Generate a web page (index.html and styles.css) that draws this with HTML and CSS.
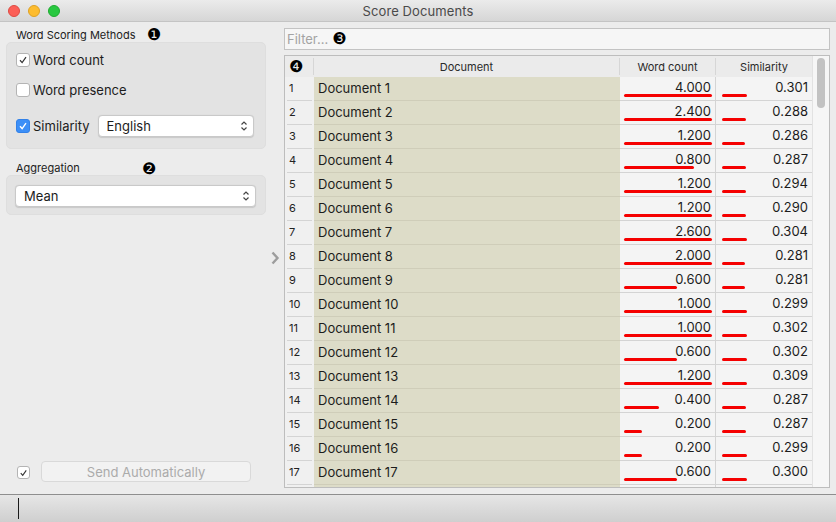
FILE: index.html
```html
<!DOCTYPE html>
<html>
<head>
<meta charset="utf-8">
<link rel="stylesheet" href="styles.css">
</head>
<body>
<div class="window">
  <div class="titlebar">
    <div class="lights">
      <span class="light red"></span><span class="light yellow"></span><span class="light green"></span>
    </div>
    <div class="title">Score Documents</div>
  </div>
  <div class="main">
    <div class="left">
      <div class="glabel">Word Scoring Methods <span class="num num1">❶</span></div>
      <div class="gbox box1">
        <div class="crow r1"><span class="cb checked"><svg viewBox="0 0 14 14"><path d="M3.5 7.3 L6 10 L10.5 3.6" fill="none" stroke="#333" stroke-width="1.4"/></svg></span><span>Word count</span></div>
        <div class="crow r2"><span class="cb"></span><span>Word presence</span></div>
        <div class="crow r3"><span class="cb blue"><svg viewBox="0 0 14 14"><path d="M3.5 7.3 L6 10 L10.5 3.6" fill="none" stroke="#fff" stroke-width="1.6"/></svg></span><span class="simlabel">Similarity</span>
          <div class="combo lang"><span>English</span><svg class="chev" viewBox="0 0 8 12"><path d="M1.5 4.5 L4 2 L6.5 4.5 M1.5 7.5 L4 10 L6.5 7.5" fill="none" stroke="#444" stroke-width="1.2"/></svg></div>
        </div>
      </div>
      <div class="glabel agg">Aggregation <span class="num num2">❷</span></div>
      <div class="gbox box2">
        <div class="combo mean"><span>Mean</span><svg class="chev" viewBox="0 0 8 12"><path d="M1.5 4.5 L4 2 L6.5 4.5 M1.5 7.5 L4 10 L6.5 7.5" fill="none" stroke="#444" stroke-width="1.2"/></svg></div>
      </div>
      <div class="spacer"></div>
      <div class="bottomrow">
        <span class="cb checked small"><svg viewBox="0 0 14 14"><path d="M3.5 7.3 L6 10 L10.5 3.6" fill="none" stroke="#333" stroke-width="1.4"/></svg></span>
        <div class="sendbtn">Send Automatically</div>
      </div>
    </div>
    <div class="splitter">
      <svg viewBox="0 0 10 14" class="arrow"><path d="M2.5 1.5 L7.5 7 L2.5 12.5" fill="none" stroke="#9d9d9d" stroke-width="2.4"/></svg>
    </div>
    <div class="right">
      <div class="filter"><span class="ph">Filter...</span> <span class="num num3">❸</span></div>
      <div class="tableframe">
        <div class="rows" id="rows">
          <div class="hrow">
            <div class="hc hidx"><span class="num num4">❹</span></div>
            <div class="hc">Document</div>
            <div class="hc">Word count</div>
            <div class="hc last">Similarity</div>
          </div>
        </div>
        <div class="scroll"><div class="thumb"></div></div>
      </div>
    </div>
  </div>
  <div class="status"><span class="cursor"></span></div>
</div>
<script>
var data = [
 [4.000,0.301],[2.400,0.288],[1.200,0.286],[0.800,0.287],[1.200,0.294],[1.200,0.290],
 [2.600,0.304],[2.000,0.281],[0.600,0.281],[1.000,0.299],[1.000,0.302],[0.600,0.302],
 [1.200,0.309],[0.400,0.287],[0.200,0.287],[0.200,0.299],[0.600,0.300]
];
var rows = document.getElementById('rows');
data.forEach(function(d, i){
  var r = document.createElement('div');
  r.className = 'row';
  var wcw = Math.min(d[0]*88, 88);
  var sw = d[1]*82;
  r.innerHTML =
    '<div class="c idx"><span>' + (i+1) + '</span></div>' +
    '<div class="c doc">Document ' + (i+1) + '</div>' +
    '<div class="c val"><span class="v">' + d[0].toFixed(3) + '</span><span class="bar" style="width:' + wcw + 'px"></span></div>' +
    '<div class="c val sim"><span class="v">' + d[1].toFixed(3) + '</span><span class="bar" style="width:' + sw + 'px"></span></div>';
  rows.appendChild(r);
});
var tail = document.createElement('div');
tail.className = 'row tail';
tail.innerHTML = '<div class="c idx"><span></span></div><div class="c doc"></div><div class="c val"></div><div class="c val sim"></div>';
rows.appendChild(tail);
</script>
</body>
</html>
```

FILE: styles.css
```css
html, body {
  margin: 0;
  padding: 0;
  width: 836px;
  height: 522px;
  overflow: hidden;
  background: #ececec;
  font-family: "Inter", "Liberation Sans", sans-serif;
  color: #1c1c1c;
}
.window {
  width: 836px;
  height: 522px;
  display: flex;
  flex-direction: column;
  background: #ececec;
}
.titlebar {
  height: 21px;
  flex: none;
  position: relative;
  background: linear-gradient(#ebebeb, #d6d6d6);
  border-bottom: 1px solid #c4c4c4;
  display: flex;
  align-items: center;
  justify-content: center;
}
.lights {
  position: absolute;
  left: 8px;
  top: 5px;
  display: flex;
  gap: 8px;
}
.light {
  width: 12px;
  height: 12px;
  border-radius: 50%;
  box-sizing: border-box;
}
.red { background: #fc5f57; border: 0.5px solid #de4a42; }
.yellow { background: #fdbc2e; border: 0.5px solid #dea123; }
.green { background: #28c840; border: 0.5px solid #1eab2f; }
.title {
  font-size: 13px;
  color: #4a4a4a;
  letter-spacing: 0.1px;
}
.main {
  flex: 1;
  display: flex;
  min-height: 0;
}
.left {
  width: 260px;
  padding: 6px 0 12px 6px;
  display: flex;
  flex-direction: column;
}
.glabel {
  height: 14px;
  font-size: 11px;
  line-height: 14px;
  padding-left: 10px;
  color: #222;
  position: relative;
}
.num {
  font-family: "DejaVu Sans", sans-serif;
  font-size: 16px;
  color: #000;
  line-height: 14px;
}
.num1 { position: absolute; left: 141px; top: 0; }
.num2 { position: absolute; left: 136px; top: 1px; }
.glabel.agg { margin-top: 12px; }
.gbox {
  background: #e3e3e3;
  border: 1px solid #dedede;
  border-radius: 5px;
  box-sizing: border-box;
}
.box1 {
  height: 107px;
  padding: 7px 0 0 9px;
}
.crow {
  display: flex;
  align-items: center;
  height: 20px;
  font-size: 13px;
  gap: 3px;
}
.crow.r2 { margin-top: 10px; }
.crow.r3 { margin-top: 15px; height: 22px; }
.cb {
  width: 14px;
  height: 14px;
  box-sizing: border-box;
  border: 1px solid #b4b4b4;
  border-radius: 3px;
  background: #fff;
  display: inline-flex;
  flex: none;
}
.cb svg { width: 12px; height: 12px; }
.cb.blue {
  background: #3c8ff7;
  border-color: #3281e8;
}
.simlabel { margin-right: 5px; }
.combo {
  height: 22px;
  box-sizing: border-box;
  background: #fff;
  border: 1px solid #c9c9c9;
  border-radius: 4px;
  box-shadow: 0 0.5px 1px rgba(0,0,0,0.12);
  display: flex;
  align-items: center;
  justify-content: space-between;
  padding: 0 5px 0 8px;
  font-size: 13px;
}
.combo .chev { width: 8px; height: 12px; }
.lang { width: 156px; margin-top: -1px; }
.box2 {
  height: 40px;
  padding: 9px 9px 0 8px;
}
.mean { width: 241px; }
.spacer { flex: 1; }
.bottomrow {
  display: flex;
  align-items: center;
  height: 21px;
  padding-left: 11px;
}
.cb.small { width: 13px; height: 13px; margin-top: 1px; }
.sendbtn {
  margin-left: 11px;
  width: 210px;
  height: 21px;
  box-sizing: border-box;
  border: 1px solid #d9d9d9;
  border-radius: 4px;
  background: #f2f2f2;
  color: #ababab;
  font-size: 13px;
  display: flex;
  align-items: center;
  justify-content: center;
}
.splitter {
  width: 18px;
  display: flex;
  align-items: center;
  justify-content: center;
}
.arrow { width: 10px; height: 14px; }
.right {
  flex: 1;
  padding: 6px 6px 6px 0;
  display: flex;
  flex-direction: column;
}
.filter {
  height: 22px;
  box-sizing: border-box;
  background: #f6f6f6;
  border: 1px solid #c3c3c3;
  display: flex;
  align-items: center;
  padding-left: 2px;
  font-size: 13px;
  gap: 4px;
}
.ph { color: #a3a3a3; }
.tableframe {
  margin-top: 5px;
  height: 433px;
  box-sizing: border-box;
  border: 1px solid #bdbdbd;
  display: flex;
  overflow: hidden;
  background: #f4f4f4;
}
.rows {
  width: 527px;
  flex: none;
  overflow: hidden;
}
.hrow {
  display: grid;
  grid-template-columns: 29px 306px 96px 96px;
  height: 21px;
  background: #ebebeb;
}
.hc {
  font-size: 11px;
  color: #2a2a2a;
  display: flex;
  align-items: center;
  justify-content: center;
  border-right: 1px solid #d6d6d6;
  margin: 2px 0;
}
.hc.last { border-right: none; }
.hidx { justify-content: flex-start; padding-left: 4px; }
.row {
  display: grid;
  grid-template-columns: 29px 306px 96px 96px;
  height: 24px;
}
.c {
  box-sizing: border-box;
  border-bottom: 1px solid #d4d4d4;
  height: 24px;
}
.idx {
  border-bottom: none;
  padding: 0 2px;
  background: #f0f0f0;
}
.idx span {
  display: block;
  height: 24px;
  box-sizing: border-box;
  border-bottom: 1px solid #d4d4d4;
  font-size: 11px;
  line-height: 22px;
  padding-left: 2px;
  color: #222;
}
.doc {
  background: #dddcc8;
  border-bottom-color: #cfcdb9;
  font-size: 13px;
  line-height: 22px;
  padding-left: 4px;
}
.val {
  position: relative;
  text-align: right;
  padding-right: 4px;
  font-size: 13px;
  line-height: 21px;
  border-right: 1px solid #d4d4d4;
  background: #f4f4f4;
}
.val.sim { border-right: none; }
.bar {
  position: absolute;
  left: 4px;
  bottom: 3px;
  height: 3px;
  border-radius: 2px;
  background: #f50000;
}
.sim .bar { left: 6px; }
.scroll {
  flex: 1;
  border-left: 1px solid #e2e2e2;
  background: #f6f6f6;
  position: relative;
}
.thumb {
  position: absolute;
  left: 4px;
  top: 2px;
  width: 8px;
  height: 50px;
  border-radius: 4px;
  background: #c2c2c2;
}
.status {
  height: 27px;
  flex: none;
  border-top: 1px solid #8e8e8e;
  background: linear-gradient(#e6e6e6, #cfcfcf);
  position: relative;
}
.cursor {
  position: absolute;
  left: 18px;
  top: 3px;
  width: 1px;
  height: 21px;
  background: #1a1a1a;
}
```
